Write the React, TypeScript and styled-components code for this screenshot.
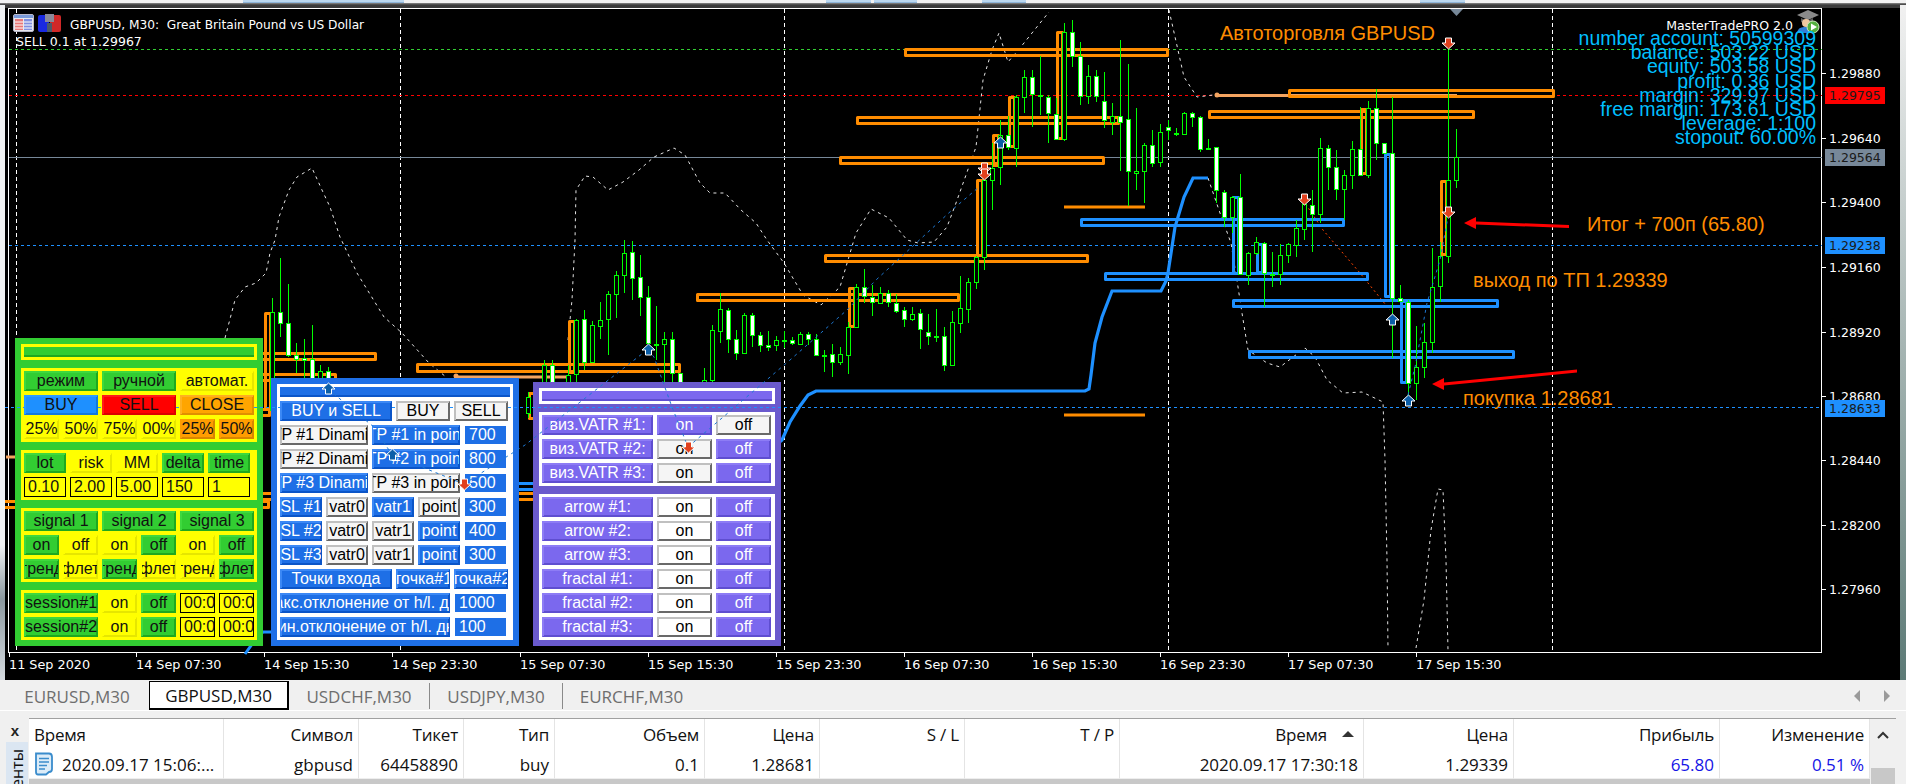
import React from 'react';
import styled, { createGlobalStyle } from 'styled-components';

const Global = createGlobalStyle`
  html, body { margin: 0; padding: 0; background: #f0f0f0; overflow: hidden; }
  #root { width: 1906px; height: 784px; }
`;

type Look = { bg: string; lt: string; dk: string; fg: string };
const looks: Record<string, Look> = {
  green: { bg: '#32cd32', lt: '#3ed83e', dk: '#1fa81f', fg: '#111' },
  yellow: { bg: '#ffff00', lt: '#ffff00', dk: '#e6e600', fg: '#111' },
  dodger: { bg: '#1e90ff', lt: '#2a9cff', dk: '#1478dc', fg: '#111' },
  red: { bg: '#ff0000', lt: '#ff1a1a', dk: '#dc0000', fg: '#111' },
  orange: { bg: '#ffa500', lt: '#ffb020', dk: '#e09000', fg: '#111' },
  amber: { bg: '#ff9d00', lt: '#ff9d00', dk: '#d98600', fg: '#111' },
  blue: { bg: '#1e6fe6', lt: '#3b88f5', dk: '#0b55c8', fg: '#fff' },
  ash: { bg: '#f5f5f5', lt: '#c0c0c0', dk: '#696969', fg: '#000' },
  white: { bg: '#ffffff', lt: '#c0c0c0', dk: '#696969', fg: '#000' },
  purple: { bg: '#7b68ee', lt: '#8d7cf5', dk: '#5f4ed0', fg: '#fff' },
};

const Page = styled.div`
  width: 1906px;
  height: 784px;
  display: flex;
  flex-direction: column;
  background: #f0f0f0;
  overflow: hidden;
`;
const TopStrip = styled.div`
  height: 5px;
  display: flex;
  background: linear-gradient(#f2f2f2 0 3px, #8a8a8a 3px, #3a3a3a 5px);
`;
const TopTab = styled.div<{ $at: number; $w: number }>`
  margin-left: ${(p) => p.$at}px;
  width: ${(p) => p.$w}px;
  height: 2px;
  background: #bcd8f0;
  border-bottom: 1px solid #8fb5d8;
`;
const ChartRow = styled.div`
  display: flex;
  height: 675px;
`;
const LeftEdge = styled.div`
  width: 5px;
  background: linear-gradient(#f0f2f3 0 80%, #8a979e 88%, #d6dbe0);
`;
const RightEdge = styled.div`
  width: 6px;
  background: linear-gradient(#f0f0f0 0 1%, #5c7a76);
`;
const Chart = styled.div`
  position: relative;
  width: 1895px;
  height: 675px;
  background: #000;
  overflow: hidden;
`;
const ChartLayer = styled.svg`
  position: absolute;
  left: 0;
  top: 0;
  width: 1895px;
  height: 675px;
`;
const OverLayer = styled(ChartLayer)`
  z-index: 5;
  pointer-events: none;
`;
const AxisText = styled.text`
  font-family: 'DejaVu Sans', sans-serif;
  font-size: 12.5px;
  fill: #fff;
  white-space: pre;
`;
const TitleText = styled(AxisText)`
  font-size: 12.2px;
`;
const TimeText = styled(AxisText)`
  font-size: 12.8px;
`;
const PriceTagText = styled(AxisText)`
  fill: #1a1a1a;
`;
const Note = styled.text`
  font-family: 'Liberation Sans', sans-serif;
  font-size: 20px;
  fill: #ff8c00;
`;
const InfoList = styled.div`
  position: absolute;
  right: 84px;
  top: 26px;
  display: flex;
  flex-direction: column;
  align-items: flex-end;
  font-family: 'Liberation Sans', sans-serif;
  font-size: 19.5px;
  line-height: 14.2px;
  color: #00bfff;
  white-space: nowrap;
  z-index: 4;
`;

/* trading panels */
const Panel = styled.div<{ $bg: string; $x: number; $y: number; $h: number }>`
  position: absolute;
  left: ${(p) => p.$x - 5}px;
  top: ${(p) => p.$y - 5}px;
  width: 248px;
  height: ${(p) => p.$h}px;
  box-sizing: border-box;
  padding: 6px;
  display: flex;
  flex-direction: column;
  gap: 8px;
  background: ${(p) => p.$bg};
  z-index: 3;
`;
const Section = styled.div<{ $bg: string }>`
  background: ${(p) => p.$bg};
  padding: 3px;
  display: flex;
  flex-direction: column;
  gap: 4px;
`;
const Bar = styled.div<{ $look: string }>`
  height: 10px;
  box-sizing: border-box;
  background: ${(p) => looks[p.$look].bg};
  border-bottom: 2px solid ${(p) => looks[p.$look].dk};
`;
const Grid = styled.div<{ $cols: string }>`
  display: grid;
  grid-template-columns: ${(p) => p.$cols};
  column-gap: 4px;
  height: 20px;
`;
const Btn = styled.div<{ $look: string }>`
  box-sizing: border-box;
  height: 20px;
  display: flex;
  align-items: center;
  justify-content: center;
  overflow: hidden;
  white-space: nowrap;
  font-family: 'Liberation Sans', sans-serif;
  font-size: 16px;
  background: ${(p) => looks[p.$look].bg};
  color: ${(p) => looks[p.$look].fg};
  border-style: solid;
  border-width: 1px;
  border-color: ${(p) => `${looks[p.$look].lt} ${looks[p.$look].dk} ${looks[p.$look].dk} ${looks[p.$look].lt}`};
  box-shadow: inset 1px 1px 0 ${(p) => looks[p.$look].lt}, inset -1px -1px 0 ${(p) => looks[p.$look].dk};
`;
const Field = styled.div`
  box-sizing: border-box;
  height: 20px;
  display: flex;
  align-items: center;
  padding-left: 3px;
  overflow: hidden;
  white-space: nowrap;
  font-family: 'Liberation Sans', sans-serif;
  font-size: 16px;
  background: #ffff00;
  color: #111;
  border: 1px solid #000;
`;
const BlueField = styled(Field)`
  height: 18px;
  margin: 1px 0 0 1px;
  padding-left: 4px;
  background: #1e6fe6;
  color: #fff;
  border: none;
`;

/* tabs */
const TabBar = styled.div`
  height: 29px;
  margin-top: 1px;
  display: flex;
  padding-left: 5px;
  background: #f0f0f0;
  border-bottom: 1px solid #fff;
  position: relative;
`;
const Tab = styled.div<{ $w: number; $on?: boolean; $sep?: boolean }>`
  box-sizing: border-box;
  width: ${(p) => p.$w}px;
  height: ${(p) => (p.$on ? 29 : 26)}px;
  margin-top: ${(p) => (p.$on ? 0 : 2)}px;
  display: flex;
  align-items: center;
  justify-content: center;
  font-family: 'Open Sans', sans-serif;
  font-size: 17px;
  white-space: nowrap;
  color: ${(p) => (p.$on ? '#111' : '#6e6e6e')};
  background: ${(p) => (p.$on ? '#fff' : 'transparent')};
  border: ${(p) => (p.$on ? '1px solid #000' : 'none')};
  border-right: ${(p) => (p.$sep ? '1px solid #8a8a8a' : p.$on ? '2px solid #000' : 'none')};
  border-bottom: ${(p) => (p.$on ? '2px solid #000' : 'none')};
`;
const TabArrows = styled.div`
  margin-left: auto;
  margin-right: 16px;
  display: flex;
  align-items: center;
  gap: 24px;
`;
const TabArrow = styled.div<{ $dir: 'l' | 'r' }>`
  width: 0;
  height: 0;
  border-top: 6px solid transparent;
  border-bottom: 6px solid transparent;
  ${(p) => (p.$dir === 'l' ? 'border-right: 6px solid #9a9a9a;' : 'border-left: 6px solid #9a9a9a;')}
`;

/* terminal table */
const Terminal = styled.div`
  margin-top: 7px;
  flex: 1;
  min-height: 0;
  display: flex;
  background: #f0f0f0;
  overflow: hidden;
`;
const Dock = styled.div`
  width: 29px;
  box-sizing: border-box;
  padding-left: 7px;
  display: flex;
  flex-direction: column;
  align-items: flex-start;
`;
const DockClose = styled.div`
  width: 16px;
  height: 24px;
  display: flex;
  align-items: center;
  justify-content: center;
  font-family: 'Liberation Sans', sans-serif;
  font-weight: 700;
  font-size: 15px;
  color: #222;
`;
const DockTab = styled.div`
  width: 22px;
  flex: 1;
  display: flex;
  justify-content: center;
  margin-left: -1px;
  background: #dbe6f2;
  padding-top: 2px;
  overflow: hidden;
`;
const DockLabel = styled.span`
  writing-mode: vertical-rl;
  transform: rotate(180deg);
  font-family: 'Open Sans', sans-serif;
  font-size: 16px;
  color: #111;
  line-height: 20px;
  height: 44px;
`;
const TableWrap = styled.div`
  width: 1841px;
  border-top: 1px solid #a0a0a0;
  background: #c8c8c8;
`;
const TableGrid = styled.div`
  display: grid;
  grid-template-columns: 195px 135px 105px 91px 150px 115px 145px 155px 244px 150px 206px 150px;
  grid-template-rows: 31px 29px;
  background: #fff;
`;
const Cell = styled.div<{ $left?: boolean; $head?: boolean; $profit?: boolean }>`
  box-sizing: border-box;
  display: flex;
  align-items: center;
  justify-content: ${(p) => (p.$left ? 'flex-start' : 'flex-end')};
  gap: 5px;
  padding: 0 5px;
  font-family: 'Open Sans', sans-serif;
  font-size: 17px;
  letter-spacing: ${(p) => (p.$head ? '-0.2px' : '0')};
  white-space: nowrap;
  overflow: hidden;
  color: ${(p) => (p.$profit ? '#1414e6' : '#111')};
  border-right: 1px solid #e4e4e4;
  border-bottom: ${(p) => (p.$head ? 'none' : '1px solid #eee')};
`;
const RowStamp = styled.span`
  margin-left: 3px;
`;
const SortMark = styled.span`
  width: 0;
  height: 0;
  margin: 0 4px 2px 10px;
  border-left: 6px solid transparent;
  border-right: 6px solid transparent;
  border-bottom: 6px solid #333;
`;
const Scroll = styled.div`
  width: 26px;
  display: flex;
  flex-direction: column;
  align-items: center;
  border-top: 1px solid #a0a0a0;
  background: #f0f0f0;
`;
const ScrollThumb = styled.div`
  width: 24px;
  margin-top: auto;
  height: 16px;
  background: #c8c8c8;
`;
const ScrollCap = styled.div`
  height: 32px;
  display: flex;
  align-items: center;
`;

type C = [number, number, number, number, number, number];
const candles: C[] = [
  [272,312,410,298,410,0],[280,312,323,258,337,1],[288,323,355,284,357,1],[296,355,359,343,373,1],[304,358,360,339,378,1],[312,359,378,325,378,1],[320,371,378,365,378,0],[328,371,379,367,379,1],
  [528,397,413,392,418,0],[544,365,382,360,382,0],[552,365,382,360,382,1],[568,375,382,365,382,0],[576,320,374,319,382,0],[584,319,362,310,370,1],[592,325,362,321,362,0],[600,320,326,302,339,0],[608,294,319,291,355,0],[616,275,294,271,318,0],[624,253,275,240,293,0],[632,252,278,241,300,1],[640,277,297,255,316,1],[648,297,343,286,347,1],[656,344,345,306,360,1],[664,339,344,332,382,0],[672,339,373,332,382,1],[680,373,382,373,382,1],[704,380,382,368,382,0],[712,330,380,325,382,0],[720,309,331,293,343,0],[728,310,339,308,353,1],[736,339,353,330,360,1],[744,315,353,313,354,0],[752,315,335,313,347,1],[760,335,345,332,352,1],[768,345,347,331,351,1],[776,340,345,336,351,0],
  [784,340,341,331,348,1],[792,340,343,337,345,1],[800,334,344,332,345,0],[808,334,339,332,345,1],[816,339,355,334,356,1],[824,355,356,350,372,1],[832,354,362,344,377,1],[840,354,362,347,365,0],[848,327,355,322,374,0],[856,287,327,284,328,0],[864,287,296,269,303,1],[872,297,302,285,316,1],[880,293,303,287,304,0],[888,293,302,290,307,1],[896,303,311,294,313,1],[904,310,319,307,327,1],[912,314,319,307,321,0],[920,313,329,309,349,1],[928,332,336,314,345,1],[936,336,337,309,342,1],[944,336,365,327,371,1],[952,322,365,311,366,0],[960,308,323,276,333,0],[968,282,309,278,323,0],[976,257,282,256,289,0],[984,180,257,178,270,0],[992,168,180,143,210,0],[1000,135,167,120,185,0],[1008,135,147,116,150,1],[1016,97,148,95,167,0],[1024,77,97,70,113,0],[1032,77,94,70,127,1],[1040,95,96,56,115,1],[1048,97,113,95,143,1],[1056,114,139,98,140,1],[1064,32,139,23,141,0],[1072,32,56,20,67,1],[1080,56,96,42,105,1],[1088,76,96,65,104,0],[1096,76,96,70,102,1],[1104,101,120,72,128,1],[1112,116,122,103,135,0],[1120,116,122,40,171,1],[1128,119,171,64,206,1],[1136,171,173,108,190,0],[1144,145,171,143,203,0],[1152,145,163,130,167,1],[1160,132,162,124,167,0],[1168,127,130,120,140,1],[1176,133,134,128,136,1],[1184,113,134,112,135,0],[1192,113,117,112,127,1],[1200,117,149,116,152,1],[1208,148,149,139,150,1],[1216,147,190,147,203,1],[1224,192,217,190,227,1],[1232,197,217,196,233,0],[1240,197,274,174,275,1],[1248,253,275,252,285,0],[1256,242,253,237,255,0],[1264,243,273,242,307,1],[1272,274,275,252,287,1],[1280,255,274,244,285,0],[1288,244,255,243,263,0],[1296,228,245,220,257,0],[1304,204,229,199,240,0],[1312,205,214,190,252,1],[1320,148,214,138,223,0],[1328,148,167,145,190,1],[1336,167,189,150,200,1],[1344,175,189,170,220,0],[1352,149,175,141,189,0],[1360,149,175,107,176,1],[1368,108,175,101,178,0],[1376,108,143,89,160,1],[1384,143,153,143,153,1],[1392,153,298,97,358,1],[1400,298,301,285,302,1],[1408,302,383,300,397,1],[1416,367,383,326,400,0],[1424,342,367,323,378,0],[1432,287,342,248,353,0],[1440,256,286,242,302,0],[1448,180,256,49,263,0],[1456,157,180,129,188,0],
];
const orangeRects = [[904,48,1169,57],[856,116,1120,125],[839,156,1105,165],[824,254,1089,263],[696,293,960,302],[1288,89,1555,98],[1208,110,1475,119],[200,352,377,361],[416,363,681,373],[200,373,337,382],[0,500,270,509],[200,492,540,501],[200,408,271,417],[264,312,272,410],[568,320,576,374],[528,392,536,420],[848,287,856,328],[976,179,984,257],[992,134,1000,167],[1008,96,1016,148],[1056,31,1064,140],[1360,108,1368,175],[1440,180,1448,256]];
const blueRects = [[1080,218,1345,227],[1104,272,1369,281],[1232,299,1499,308],[1248,350,1515,359],[1232,196,1240,275],[1256,243,1264,274],[1384,153,1392,298],[1400,300,1408,384],[500,482,540,491]];
const whiteCurves = [
  '225,338 235,300 245,287 256,283 266,273 270,253 275,240 279,217 289,190 297,177 312,168 322,190 330,207 340,237 357,273 384,317 402,333 429,363 446,377',
  '568,340 572,300 575,240 576,190 585,176 593,177 608,190 623,182 639,170 654,157 674,148 685,155 700,183 710,193 725,193 741,210 756,223 767,240 784,263 803,295 821,305 840,287 856,233 866,217 871,209 889,218 907,240 918,243 934,242 947,227 956,203 976,147 983,80 992,50 999,33 1008,62 1020,48 1032,33 1049,12',
  '1169,10 1184,77 1197,97 1213,95',
  '1208,178 1220,213 1231,243 1238,287 1242,313 1248,350 1267,363 1280,367 1305,348 1315,357 1327,380 1343,393 1362,392 1383,402 1385,460 1387,560 1388,648',
  '1416,648 1424,600 1431,530 1438,489 1443,490 1446,560 1448,650',
];
const blueDots = ['688,447 790,360 847,310 876,280 952,210 979,187', '464,484 525,445 647,350', '648,350 654,357 672,407 688,447', '328,389 375,428 392,455 464,484', '1408,395 1415,367 1427,303 1440,260 1448,217'];
const downArrows = [[1448,43],[1448,212],[984,168],[984,174],[1304,199]];
const upArrows = [[1000,143],[1392,320],[1408,401]];
const overDown = [[464,484],[688,447]];
const overUp = [[648,350],[328,389],[392,455]];
const ticks: [number, string][] = [[73,'1.29880'],[138,'1.29640'],[202,'1.29400'],[267,'1.29160'],[332,'1.28920'],[396,'1.28680'],[460,'1.28440'],[525,'1.28200'],[589,'1.27960']];
const times: [number, string][] = [[136,'14 Sep 07:30'],[264,'14 Sep 15:30'],[392,'14 Sep 23:30'],[520,'15 Sep 07:30'],[648,'15 Sep 15:30'],[776,'15 Sep 23:30'],[904,'16 Sep 07:30'],[1032,'16 Sep 15:30'],[1160,'16 Sep 23:30'],[1288,'17 Sep 07:30'],[1416,'17 Sep 15:30']];
const tags: [number, string, string][] = [[95,'1.29795','#ff0000'],[157,'1.29564','#778899'],[245,'1.29238','#1e90ff'],[408,'1.28633','#1e90ff']];
const hLines: [number, string][] = [[49,'#32cd32'],[95,'#ff0000'],[245,'#1e90ff']];
const infoRows = ['number account: 50599309','balance: 503.22 USD','equity: 503.58 USD','profit: 0.36 USD','margin: 329.97 USD','free margin: 173.61 USD','leverage: 1:100','stopout: 60.00%'];

const frame = (r: number[], c: string, i: number) => (
  <rect key={i} x={r[0] + 1.5} y={r[1] + 1.5} width={r[2] - r[0] - 3} height={r[3] - r[1] - 3} fill="none" stroke={c} strokeWidth={3} strokeLinejoin="round" />
);
const UpArrow = ({ x, y }: { x: number; y: number }) => (
  <path d={`M${x + 0.5} ${y - 6}L${x + 7} ${y}H${x + 3.5}V${y + 5}H${x - 2.5}V${y}H${x - 6}Z`} fill="#0a5ea8" stroke="#fff" strokeWidth={1} />
);
const DownArrow = ({ x, y }: { x: number; y: number }) => (
  <path d={`M${x + 0.5} ${y + 6}L${x + 7} ${y}H${x + 3.5}V${y - 5}H${x - 2.5}V${y}H${x - 6}Z`} fill="#e0401e" stroke="#fff" strokeWidth={1} />
);

const ChartBase = () => (
  <ChartLayer viewBox="5 5 1895 675">
    <rect x="5" y="5" width="1895" height="3" fill="#3a3a3a" />
    <rect x="8.5" y="8.5" width="1813" height="644" fill="none" stroke="#fff" />
    {[16, 400, 784, 1168, 1552].map((x) => (
      <line key={x} x1={x + 0.5} x2={x + 0.5} y1={9} y2={652} stroke="#fff" strokeDasharray="4 3" />
    ))}
    {hLines.map(([y, c]) => (
      <line key={y} x1={9} x2={1822} y1={y + 0.5} y2={y + 0.5} stroke={c} strokeDasharray="3 3" />
    ))}
    <line x1={9} x2={1822} y1={157.5} y2={157.5} stroke="#778899" />
    {whiteCurves.map((p, i) => (
      <polyline key={i} points={p} fill="none" stroke="#e4e4e4" strokeDasharray="3 4" />
    ))}
    <polyline points="1303,200 1323,230 1360,273 1368,283 1390,310" fill="none" stroke="#ff4500" strokeDasharray="2 3" />
    <polyline points="245,654 255,640 263,632 275,632" fill="none" stroke="#1e90ff" strokeWidth={3} />
    <polyline points="775,446 782,440 790,422 800,406 808,395 816,391 1085,391 1089,389 1091,375 1095,343 1102,317 1112,291 1161,291 1166,281 1168,273 1175,227 1184,197 1193,178 1208,178" fill="none" stroke="#1e90ff" strokeWidth={3.2} />
    <line x1={1064} x2={1145} y1={207} y2={207} stroke="#ff8c00" strokeWidth={3} />
    <line x1={1064} x2={1145} y1={415} y2={415} stroke="#ff8c00" strokeWidth={3} />
    <line x1={1218} x2={1457} y1={95.5} y2={95.5} stroke="#f4a460" strokeWidth={3} />
    <circle cx={1217} cy={95} r={2.5} fill="#f4a460" />
    <line x1={456} x2={569} y1={377} y2={377} stroke="#f4a460" strokeWidth={3} />
    <circle cx={456} cy={376} r={2.5} fill="#f4a460" />
    <line x1={6} x2={15} y1={457} y2={457} stroke="#f4a460" strokeWidth={3} />
    {orangeRects.map((r, i) => frame(r, '#ff8c00', i))}
    {blueRects.map((r, i) => frame(r, '#1e90ff', i))}
    {candles.map(([x, t, b, h, l, w]) => (
      <g key={x}>
        <line x1={x + 0.5} x2={x + 0.5} y1={h} y2={l} stroke="#00ff00" />
        <rect x={x - 1.5} y={t + 0.5} width={4} height={Math.max(b - t, 1)} fill={w ? '#fff' : '#000'} stroke="#00ff00" />
      </g>
    ))}
    {downArrows.map(([x, y]) => <DownArrow key={`${x}${y}`} x={x} y={y} />)}
    {upArrows.map(([x, y]) => <UpArrow key={`${x}${y}`} x={x} y={y} />)}
    <path d="M1450 9H1463L1456.5 16Z" fill="#778899" />
    <path d="M1464 223L1476 217V221.5L1569 225V228L1476 224.5V229Z" fill="#ff0000" />
    <path d="M1432 384L1444 378V382.5L1577 369.5V372.5L1444 385.5V390Z" fill="#ff0000" />
    <Note x={1220} y={40}>Автоторговля GBPUSD</Note>
    <Note x={1587} y={231}>Итог + 700п (65.80)</Note>
    <Note x={1473} y={287}>выход по ТП 1.29339</Note>
    <Note x={1463} y={405}>покупка 1.28681</Note>
    {ticks.map(([y, t]) => (
      <g key={t}>
        <line x1={1822} x2={1826} y1={y + 0.5} y2={y + 0.5} stroke="#fff" />
        <AxisText x={1829} y={y + 5}>{t}</AxisText>
      </g>
    ))}
    {tags.map(([y, t, c]) => (
      <g key={t}>
        <rect x={1825} y={y - 8} width={60} height={17} fill={c} />
        <PriceTagText x={1829} y={y + 5}>{t}</PriceTagText>
      </g>
    ))}
    <line x1={9.5} x2={9.5} y1={652} y2={657} stroke="#fff" />
    <TimeText x={9} y={669}>11 Sep 2020</TimeText>
    {times.map(([x, t]) => (
      <g key={t}>
        <line x1={x + 0.5} x2={x + 0.5} y1={652} y2={657} stroke="#fff" />
        <TimeText x={x} y={669}>{t}</TimeText>
      </g>
    ))}
    <TitleText x={70} y={29}>GBPUSD, M30:  Great Britain Pound vs US Dollar</TitleText>
    <AxisText x={16} y={46}>SELL 0.1 at 1.29967</AxisText>
    <AxisText x={1793} y={30} textAnchor="end">MasterTradePRO 2.0</AxisText>
    {/* window icon */}
    <rect x={13.5} y={14.5} width={20} height={17} rx={1.5} fill="#e8e8ee" stroke="#b8b8c8" />
    <rect x={14} y={15} width={19} height={3} fill="#7a9ad8" />
    <rect x={15} y={19} width={8} height={11} fill="#e87878" />
    <rect x={24} y={19} width={8} height={11} fill="#8090e0" />
    <path d="M15 22H23M15 25H23M15 28H23M24 22H32M24 25H32M24 28H32" stroke="#fff" />
    {/* account icon */}
    <rect x={38} y={15} width={11} height={17} rx={2} fill="#1a2ae0" />
    <rect x={50} y={15} width={11} height={17} rx={2} fill="#d02828" />
    <rect x={45} y={14} width={9} height={8} fill="#8a8a9a" />
    <rect x={47} y={23} width={5} height={9} fill="#4a5a6a" />
    {/* expert icon */}
    <path d="M1797 15L1808 10L1819 15L1808 20Z" fill="#8a8a8a" />
    <path d="M1801 18V22Q1807 25 1813 22V18L1807 21Z" fill="#5c5c5c" />
    <circle cx={1806} cy={23} r={4} fill="#f0c8a0" />
    <path d="M1797 33Q1798 26 1806 27Q1811 27 1813 30V33Z" fill="#2f7fd8" />
    <circle cx={1813} cy={27} r={6} fill="#55b040" stroke="#cfe8c0" />
    <path d="M1811 23.5L1817 27L1811 30.5Z" fill="#fff" />
  </ChartLayer>
);

const ChartOver = () => (
  <OverLayer viewBox="5 5 1895 675">
    <path d="M5 407.5H24M98 407.5H102M176 407.5H180M254 407.5H280M392 407.5H396M450 407.5H454M508 407.5H1822" stroke="#1e90ff" strokeDasharray="3 3" />
    {blueDots.map((p, i) => (
      <polyline key={i} points={p} fill="none" stroke="#1e78d2" strokeDasharray="3 4" />
    ))}
    {overDown.map(([x, y]) => <DownArrow key={x} x={x} y={y} />)}
    {overUp.map(([x, y]) => <UpArrow key={x} x={x} y={y} />)}
  </OverLayer>
);

const Row = ({ cols, items }: { cols: string; items: [string, string][] }) => (
  <Grid $cols={cols}>
    {items.map(([t, l], i) => (
      <Btn key={i} $look={l}>{t}</Btn>
    ))}
  </Grid>
);
const C3 = '74px 74px 74px';
const C6 = 'repeat(6, 35px)';
const C5 = 'repeat(5, 42px)';
const CS = '74px 35px 35px 35px 35px';

const GreenPanel = () => (
  <Panel $bg="#32cd32" $x={15} $y={338} $h={308}>
    <Section $bg="#ffff00"><Bar $look="green" /></Section>
    <Section $bg="#ffff00">
      <Row cols={C3} items={[['режим','green'],['ручной','green'],['автомат.','yellow']]} />
      <Row cols={C3} items={[['BUY','dodger'],['SELL','red'],['CLOSE','orange']]} />
      <Row cols={C6} items={[['25%','yellow'],['50%','yellow'],['75%','yellow'],['00%','yellow'],['25%','amber'],['50%','amber']]} />
    </Section>
    <Section $bg="#ffff00">
      <Row cols={C5} items={[['lot','green'],['risk','yellow'],['MM','yellow'],['delta','green'],['time','green']]} />
      <Grid $cols={C5}>
        {['0.10','2.00','5.00','150','1'].map((v) => <Field key={v}>{v}</Field>)}
      </Grid>
    </Section>
    <Section $bg="#ffff00">
      <Row cols={C3} items={[['signal 1','green'],['signal 2','green'],['signal 3','green']]} />
      <Row cols={C6} items={[['on','green'],['off','yellow'],['on','yellow'],['off','green'],['on','yellow'],['off','green']]} />
      <Row cols={C6} items={[['тренд','green'],['флет','yellow'],['тренд','green'],['флет','yellow'],['тренд','yellow'],['флет','green']]} />
    </Section>
    <Section $bg="#ffff00">
      {['session#1','session#2'].map((s) => (
        <Grid key={s} $cols={CS}>
          <Btn $look="green">{s}</Btn>
          <Btn $look="yellow">on</Btn>
          <Btn $look="green">off</Btn>
          <Field>00:00</Field>
          <Field>00:00</Field>
        </Grid>
      ))}
    </Section>
  </Panel>
);

const C_A = '112px 54px 54px';
const C_B = '88px 88px 42px';
const C_C = 'repeat(4, 42px) 42px';
const C_D = '170px 52px';
const vals: [string, string, string, string, string][] = [
  ['TP #1 Dinamic', 'ash', 'TP #1 in point', 'blue', '700'],
  ['TP #2 Dinamic', 'ash', 'TP #2 in point', 'blue', '800'],
  ['TP #3 Dinamic', 'blue', 'TP #3 in point', 'ash', '500'],
];
const sls: [string, string, string, string, string][] = [
  ['SL #1', 'ash', 'blue', 'ash', '300'],
  ['SL #2', 'ash', 'ash', 'blue', '400'],
  ['SL #3', 'ash', 'ash', 'blue', '300'],
];
const BluePanel = () => (
  <Panel $bg="#1e6fe6" $x={271} $y={378} $h={268}>
    <Section $bg="#fff">
      <Bar $look="blue" />
      <Row cols={C_A} items={[['BUY и SELL','blue'],['BUY','ash'],['SELL','ash']]} />
      {vals.map(([a, la, b, lb, v]) => (
        <Grid key={a} $cols={C_B}>
          <Btn $look={la}>{a}</Btn>
          <Btn $look={lb}>{b}</Btn>
          <BlueField>{v}</BlueField>
        </Grid>
      ))}
      {sls.map(([a, l0, l1, l2, v]) => (
        <Grid key={a} $cols={C_C}>
          <Btn $look="blue">{a}</Btn>
          <Btn $look={l0}>vatr0</Btn>
          <Btn $look={l1}>vatr1</Btn>
          <Btn $look={l2}>point</Btn>
          <BlueField>{v}</BlueField>
        </Grid>
      ))}
      <Row cols={C_A} items={[['Точки входа','blue'],['точка#1','blue'],['точка#2','blue']]} />
      <Grid $cols={C_D}>
        <Btn $look="blue">макс.отклонение от h/l. дня</Btn>
        <BlueField>1000</BlueField>
      </Grid>
      <Grid $cols={C_D}>
        <Btn $look="blue">мин.отклонение от h/l. дня</Btn>
        <BlueField>100</BlueField>
      </Grid>
    </Section>
  </Panel>
);

const C_P = '111px 55px 55px';
const PurplePanel = () => (
  <Panel $bg="#6a5acd" $x={533} $y={382} $h={264}>
    <Section $bg="#fff"><Bar $look="purple" /></Section>
    <Section $bg="#fff">
      <Row cols={C_P} items={[['виз.VATR #1:','purple'],['on','purple'],['off','ash']]} />
      <Row cols={C_P} items={[['виз.VATR #2:','purple'],['on','ash'],['off','purple']]} />
      <Row cols={C_P} items={[['виз.VATR #3:','purple'],['on','ash'],['off','purple']]} />
    </Section>
    <Section $bg="#fff">
      {['arrow #1:','arrow #2:','arrow #3:','fractal #1:','fractal #2:','fractal #3:'].map((t) => (
        <Row key={t} cols={C_P} items={[[t,'purple'],['on','white'],['off','purple']]} />
      ))}
    </Section>
  </Panel>
);

const heads: [string, boolean?][] = [['Время', true],['Символ'],['Тикет'],['Тип'],['Объем'],['Цена'],['S / L'],['T / P'],['Время'],['Цена'],['Прибыль'],['Изменение']];
const cells = ['gbpusd','64458890','buy','0.1','1.28681','','','2020.09.17 17:30:18','1.29339'];

export default function App() {
  return (
    <Page>
      <Global />
      <TopStrip>
        <TopTab $at={243} $w={161} />
        <TopTab $at={422} $w={45} />
        <TopTab $at={3} $w={43} />
        <TopTab $at={65} $w={44} />
        <TopTab $at={394} $w={45} />
      </TopStrip>
      <ChartRow>
        <LeftEdge />
        <Chart>
          <ChartBase />
          <InfoList>{infoRows.map((r) => <span key={r}>{r}</span>)}</InfoList>
          <GreenPanel />
          <BluePanel />
          <PurplePanel />
          <ChartOver />
        </Chart>
        <RightEdge />
      </ChartRow>
      <TabBar>
        <Tab $w={144}>EURUSD,M30</Tab>
        <Tab $w={140} $on>GBPUSD,M30</Tab>
        <Tab $w={141} $sep>USDCHF,M30</Tab>
        <Tab $w={133} $sep>USDJPY,M30</Tab>
        <Tab $w={137}>EURCHF,M30</Tab>
        <TabArrows>
          <TabArrow $dir="l" />
          <TabArrow $dir="r" />
        </TabArrows>
      </TabBar>
      <Terminal>
        <Dock>
          <DockClose>x</DockClose>
          <DockTab><DockLabel>енты</DockLabel></DockTab>
        </Dock>
        <TableWrap>
          <TableGrid>
            {heads.map(([h, left], i) => (
              <Cell key={i} $head $left={left}>
                {h}
                {i === 8 && <SortMark />}
              </Cell>
            ))}
            <Cell $left>
              <svg width="20" height="24" viewBox="0 0 20 24">
                <path d="M2 1.5H15Q18 1.5 18 5V17Q18 20 15 20L12 22.5H4Q2 22.5 2 20Z" fill="#dcecf8" stroke="#3a8ccc" strokeWidth="1.8" />
                <path d="M5 6.5H15M5 10H15M5 13.5H13M5 17H11" stroke="#3a8ccc" strokeWidth="1.4" />
              </svg>
              <RowStamp>2020.09.17 15:06:...</RowStamp>
            </Cell>
            {cells.map((c, i) => <Cell key={i}>{c}</Cell>)}
            <Cell $profit>65.80</Cell>
            <Cell $profit>0.51 %</Cell>
          </TableGrid>
        </TableWrap>
        <Scroll>
          <ScrollCap>
            <svg width="14" height="10" viewBox="0 0 14 10"><path d="M2 8L7 3L12 8" fill="none" stroke="#333" strokeWidth="2" /></svg>
          </ScrollCap>
          <ScrollThumb />
        </Scroll>
      </Terminal>
    </Page>
  );
}
